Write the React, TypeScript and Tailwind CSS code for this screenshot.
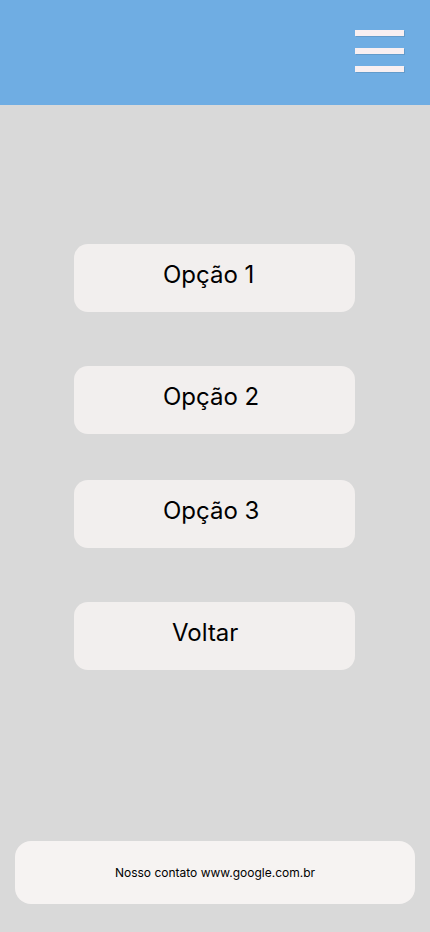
const options = [
  { label: 'Opção 1', mt: 'mt-[139px]', pl: 'pl-[89px]' },
  { label: 'Opção 2', mt: 'mt-[54px]', pl: 'pl-[89px]' },
  { label: 'Opção 3', mt: 'mt-[46px]', pl: 'pl-[89px]' },
  { label: 'Voltar', mt: 'mt-[54px]', pl: 'pl-[98px]' },
];

export default function App() {
  return (
    <div className="flex min-h-[932px] w-full flex-col bg-[#d9d9d9] font-['Inter',sans-serif] text-black">
      {/* Header */}
      <header className="flex h-[105px] items-start justify-end bg-[#6fade3] pr-[26px] pt-[30px]">
        <button className="flex flex-col gap-[12px]" aria-label="Menu">
          <span className="block h-[6px] w-[49px] bg-[#f8eff1] shadow-[1px_1px_0_rgba(0,0,0,0.1)]" />
          <span className="block h-[6px] w-[49px] bg-[#f8eff1] shadow-[1px_1px_0_rgba(0,0,0,0.1)]" />
          <span className="block h-[6px] w-[49px] bg-[#f8eff1] shadow-[1px_1px_0_rgba(0,0,0,0.1)]" />
        </button>
      </header>

      {/* Options */}
      <main className="flex flex-col items-center">
        {options.map((o) => (
          <button
            key={o.label}
            className={`${o.mt} ${o.pl} ml-[-1px] flex h-[68px] w-[281px] justify-start rounded-[14px] bg-[#f2efee] pt-[17px] text-[24px] leading-[28px]`}
          >
            {o.label}
          </button>
        ))}
      </main>

      {/* Footer */}
      <footer className="mt-auto px-[15px] pb-[28px]">
        <div className="flex h-[63px] items-center justify-center rounded-[16px] bg-[#f6f3f2] text-[12px]">
          Nosso contato www.google.com.br
        </div>
      </footer>
    </div>
  );
}
